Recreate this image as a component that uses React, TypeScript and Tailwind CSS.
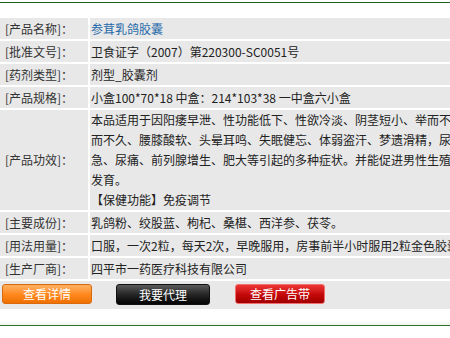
import type { ReactNode } from 'react'

const rows: { label: string; value: ReactNode; tall?: boolean }[] = [
  { label: '[产品名称]：', value: <span className="text-[#2468a8]">参茸乳鸽胶囊</span> },
  { label: '[批准文号]：', value: '卫食证字（2007）第220300-SC0051号' },
  { label: '[药剂类型]：', value: '剂型_胶囊剂' },
  { label: '[产品规格]：', value: '小盒100*70*18 中盒：214*103*38 一中盒六小盒' },
  {
    label: '[产品功效]：',
    tall: true,
    value: (
      <>
        <div>本品适用于因阳痿早泄、性功能低下、性欲冷淡、阴茎短小、举而不坚、坚</div>
        <div>而不久、腰膝酸软、头晕耳鸣、失眠健忘、体弱盗汗、梦遗滑精，尿频、尿</div>
        <div>急、尿痛、前列腺增生、肥大等引起的多种症状。并能促进男性生殖器官</div>
        <div>发育。</div>
        <div>【保健功能】免疫调节</div>
      </>
    ),
  },
  { label: '[主要成份]：', value: '乳鸽粉、绞股蓝、枸杞、桑椹、西洋参、茯苓。' },
  { label: '[用法用量]：', value: '口服，一次2粒，每天2次，早晚服用，房事前半小时服用2粒金色胶囊效果更佳' },
  { label: '[生产厂商]：', value: '四平市一药医疗科技有限公司' },
]

export default function App() {
  return (
    <div className="w-[450px] h-[338px] overflow-hidden bg-white text-[12px] text-[#222] font-['Noto_Sans_CJK_SC',sans-serif]">
      <div className="mt-[2px] h-px bg-[#1f5f22]" />
      <div className="h-[15px]" />
      <div className="w-[560px] flex flex-col gap-[2px]">
        {rows.map(r => (
          <div key={r.label} className="flex gap-[2px]">
            <div className={`w-[88px] shrink-0 bg-[#e8e8e8] pl-[5px] flex items-center text-[#333] ${r.tall ? 'h-[100px]' : 'h-[21px]'}`}>
              {r.label}
            </div>
            <div className={`flex-1 bg-[#e8e8e8] pl-[1px] whitespace-nowrap ${r.tall ? 'h-[100px] leading-[20px]' : 'h-[21px] flex items-center'}`}>
              {r.value}
            </div>
          </div>
        ))}
        <div className="h-[28px] bg-[#e8e8e8] flex items-start pt-[3px]">
          <button className="ml-[2px] w-[90px] h-[20px] rounded-[3px] border border-[#d96a0c] bg-linear-to-b from-[#ffb060] via-[#ff8a1e] to-[#f07000] text-white text-[12px] leading-none">
            查看详情
          </button>
          <button className="ml-[24px] w-[94px] h-[21px] rounded-[3px] border border-[#111] bg-linear-to-b from-[#5c5c5c] via-[#262626] to-[#050505] text-white text-[12px] leading-none">
            我要代理
          </button>
          <button className="ml-[25px] w-[90px] h-[20px] rounded-[3px] border border-[#f07070] bg-linear-to-b from-[#ec3434] via-[#c80a0a] to-[#a00000] text-white text-[12px] leading-none">
            查看广告带
          </button>
        </div>
      </div>
      <div className="h-[11px]" />
      <div className="h-[5px] bg-linear-to-b from-white to-[#eef6ea]" />
      <div className="h-px bg-[#2f6f2f]" />
    </div>
  )
}
